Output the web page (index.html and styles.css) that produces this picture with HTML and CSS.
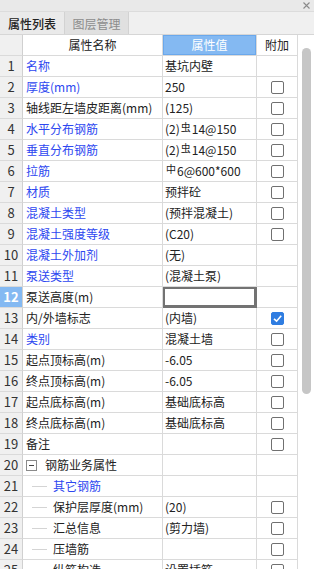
FILE: index.html
```html
<!DOCTYPE html>
<html lang="zh">
<head>
<meta charset="utf-8">
<link rel="stylesheet" href="styles.css">
</head>
<body>
<div class="panel">
  <div class="titlebar"><svg class="close" viewBox="0 0 7 7" width="7" height="7"><path d="M0.5 0.5 L6.5 6.5 M6.5 0.5 L0.5 6.5" stroke="#8a8a8a" stroke-width="1.1"/></svg></div>
  <div class="tabs">
    <div class="tab active">属性列表</div>
    <div class="tab">图层管理</div>
  </div>
  <div class="body">
    <div class="grid">
      <div class="row head">
        <div class="c num"></div>
        <div class="c name center">属性名称</div>
        <div class="c val hv">属性值</div>
        <div class="c add center">附加</div>
      </div>
      <div class="row"><div class="c num">1</div><div class="c name blue">名称</div><div class="c val">基坑内壁</div><div class="c add"></div></div>
      <div class="row"><div class="c num">2</div><div class="c name blue">厚度(mm)</div><div class="c val">250</div><div class="c add"><span class="cb"></span></div></div>
      <div class="row"><div class="c num">3</div><div class="c name">轴线距左墙皮距离(mm)</div><div class="c val">(125)</div><div class="c add"><span class="cb"></span></div></div>
      <div class="row"><div class="c num">4</div><div class="c name blue">水平分布钢筋</div><div class="c val">(2)<span class="sym">虫</span>14@150</div><div class="c add"><span class="cb"></span></div></div>
      <div class="row"><div class="c num">5</div><div class="c name blue">垂直分布钢筋</div><div class="c val">(2)<span class="sym">虫</span>14@150</div><div class="c add"><span class="cb"></span></div></div>
      <div class="row"><div class="c num">6</div><div class="c name blue">拉筋</div><div class="c val"><span class="sym">中</span>6@600*600</div><div class="c add"><span class="cb"></span></div></div>
      <div class="row"><div class="c num">7</div><div class="c name blue">材质</div><div class="c val">预拌砼</div><div class="c add"><span class="cb"></span></div></div>
      <div class="row"><div class="c num">8</div><div class="c name blue">混凝土类型</div><div class="c val">(预拌混凝土)</div><div class="c add"><span class="cb"></span></div></div>
      <div class="row"><div class="c num">9</div><div class="c name blue">混凝土强度等级</div><div class="c val">(C20)</div><div class="c add"><span class="cb"></span></div></div>
      <div class="row"><div class="c num">10</div><div class="c name blue">混凝土外加剂</div><div class="c val">(无)</div><div class="c add"></div></div>
      <div class="row"><div class="c num">11</div><div class="c name blue">泵送类型</div><div class="c val">(混凝土泵)</div><div class="c add"></div></div>
      <div class="row"><div class="c num sel">12</div><div class="c name">泵送高度(m)</div><div class="c val edit"></div><div class="c add"></div></div>
      <div class="row"><div class="c num">13</div><div class="c name">内/外墙标志</div><div class="c val">(内墙)</div><div class="c add"><span class="cb on"><svg viewBox="0 0 13 13" width="13" height="13"><path d="M3 6.8 L5.6 9.2 L10.2 3.8" fill="none" stroke="#fff" stroke-width="1.6"/></svg></span></div></div>
      <div class="row"><div class="c num">14</div><div class="c name blue">类别</div><div class="c val">混凝土墙</div><div class="c add"><span class="cb"></span></div></div>
      <div class="row"><div class="c num">15</div><div class="c name">起点顶标高(m)</div><div class="c val">-6.05</div><div class="c add"><span class="cb"></span></div></div>
      <div class="row"><div class="c num">16</div><div class="c name">终点顶标高(m)</div><div class="c val">-6.05</div><div class="c add"><span class="cb"></span></div></div>
      <div class="row"><div class="c num">17</div><div class="c name">起点底标高(m)</div><div class="c val">基础底标高</div><div class="c add"><span class="cb"></span></div></div>
      <div class="row"><div class="c num">18</div><div class="c name">终点底标高(m)</div><div class="c val">基础底标高</div><div class="c add"><span class="cb"></span></div></div>
      <div class="row"><div class="c num">19</div><div class="c name">备注</div><div class="c val"></div><div class="c add"><span class="cb"></span></div></div>
      <div class="row"><div class="c num">20</div><div class="c name tree"><span class="tog"></span>钢筋业务属性</div><div class="c val"></div><div class="c add"></div></div>
      <div class="row"><div class="c num">21</div><div class="c name sub blue"><span class="ln"></span>其它钢筋</div><div class="c val"></div><div class="c add"></div></div>
      <div class="row"><div class="c num">22</div><div class="c name sub"><span class="ln"></span>保护层厚度(mm)</div><div class="c val">(20)</div><div class="c add"><span class="cb"></span></div></div>
      <div class="row"><div class="c num">23</div><div class="c name sub"><span class="ln"></span>汇总信息</div><div class="c val">(剪力墙)</div><div class="c add"><span class="cb"></span></div></div>
      <div class="row"><div class="c num">24</div><div class="c name sub"><span class="ln"></span>压墙筋</div><div class="c val"></div><div class="c add"><span class="cb"></span></div></div>
      <div class="row"><div class="c num">25</div><div class="c name sub"><span class="ln"></span>纵筋构造</div><div class="c val">设置插筋</div><div class="c add"><span class="cb"></span></div></div>
    </div>
    <div class="scroll"><div class="thumb"></div></div>
  </div>
</div>
</body>
</html>
```
FILE: styles.css
```css
html, body {
  margin: 0;
  padding: 0;
  background: #fff;
}
body {
  font-family: "Noto Sans CJK SC", "Noto Sans", sans-serif;
  font-size: 12px;
  color: #222;
  overflow: hidden;
}
.panel {
  width: 314px;
  height: 569px;
  overflow: hidden;
  display: flex;
  flex-direction: column;
}
.titlebar {
  height: 11px;
  background: #e9e9e9;
  border-bottom: 1px solid #dcdcdc;
  display: flex;
  justify-content: flex-end;
  align-items: center;
}
.close {
  display: block;
  margin-right: 4px;
}
.tabs {
  height: 22px;
  background: #f0f0f0;
  border-bottom: 1px solid #d6d6d6;
  display: flex;
}
.tab {
  width: 64px;
  box-sizing: border-box;
  border-right: 1px solid #d2d2d2;
  background: #e0e0e0;
  color: #8c8c8c;
  display: flex;
  align-items: center;
  justify-content: center;
  font-size: 12px;
}
.tab.active {
  background: #eaeaea;
  color: #222;
  font-weight: 500;
  width: 65px;
}
.body {
  flex: 1;
  display: flex;
  min-height: 0;
}
.grid {
  width: 298px;
  flex: none;
}
.row {
  display: flex;
  height: 21px;
}
.c {
  box-sizing: border-box;
  height: 21px;
  border-right: 1px solid #dadada;
  border-bottom: 1px solid #dadada;
  display: flex;
  align-items: center;
  white-space: nowrap;
  overflow: hidden;
  line-height: 20px;
}
.num {
  width: 23px;
  background: #f0f0f0;
  border-right-color: #d0d0d0;
  justify-content: center;
  font-size: 13px;
  color: #333;
}
.num.sel {
  background: #84b9f2;
  color: #fff;
  font-weight: bold;
}
.name {
  width: 140px;
  padding-left: 3px;
}
.center {
  justify-content: center;
  padding-left: 0;
}
.val {
  width: 94px;
  padding-left: 2px;
}
.hv {
  background: #84b9f2;
  color: #fff;
  justify-content: center;
  padding-left: 0;
  box-shadow: inset 0 0 0 1px #6aa8ec;
}
.edit {
  box-shadow: inset 0 0 0 2px #737373;
  border-right-color: #737373;
  border-bottom-color: #737373;
}
.add {
  width: 41px;
  justify-content: center;
}
.blue {
  color: #2d47f0;
}
.sym {
  font-size: 10px;
  position: relative;
  top: -2px;
  margin: 0 1px;
}
.cb {
  width: 13px;
  height: 13px;
  box-sizing: border-box;
  border: 1px solid #707070;
  border-radius: 2px;
  background: #fff;
  display: block;
}
.cb.on {
  background: #2f7de1;
  border-color: #2f7de1;
  position: relative;
}
.cb.on svg {
  position: absolute;
  left: -1px;
  top: -1px;
}
.tree {
  padding-left: 3px;
}
.tog {
  width: 11px;
  height: 11px;
  box-sizing: border-box;
  border: 1px solid #8a8a8a;
  margin-right: 8px;
  position: relative;
  flex: none;
}
.tog::after {
  content: "";
  position: absolute;
  left: 2px;
  right: 2px;
  top: 4px;
  height: 1px;
  background: #444;
}
.sub {
  padding-left: 9px;
}
.ln {
  width: 15px;
  height: 1px;
  background: #d4d4d4;
  margin-right: 6px;
  flex: none;
}
.scroll {
  width: 16px;
  flex: none;
  background: #fff;
}
.thumb {
  width: 9px;
  height: 346px;
  margin-top: 13px;
  margin-left: 4px;
  background: #c6c6c6;
  border-radius: 5px;
}
```
